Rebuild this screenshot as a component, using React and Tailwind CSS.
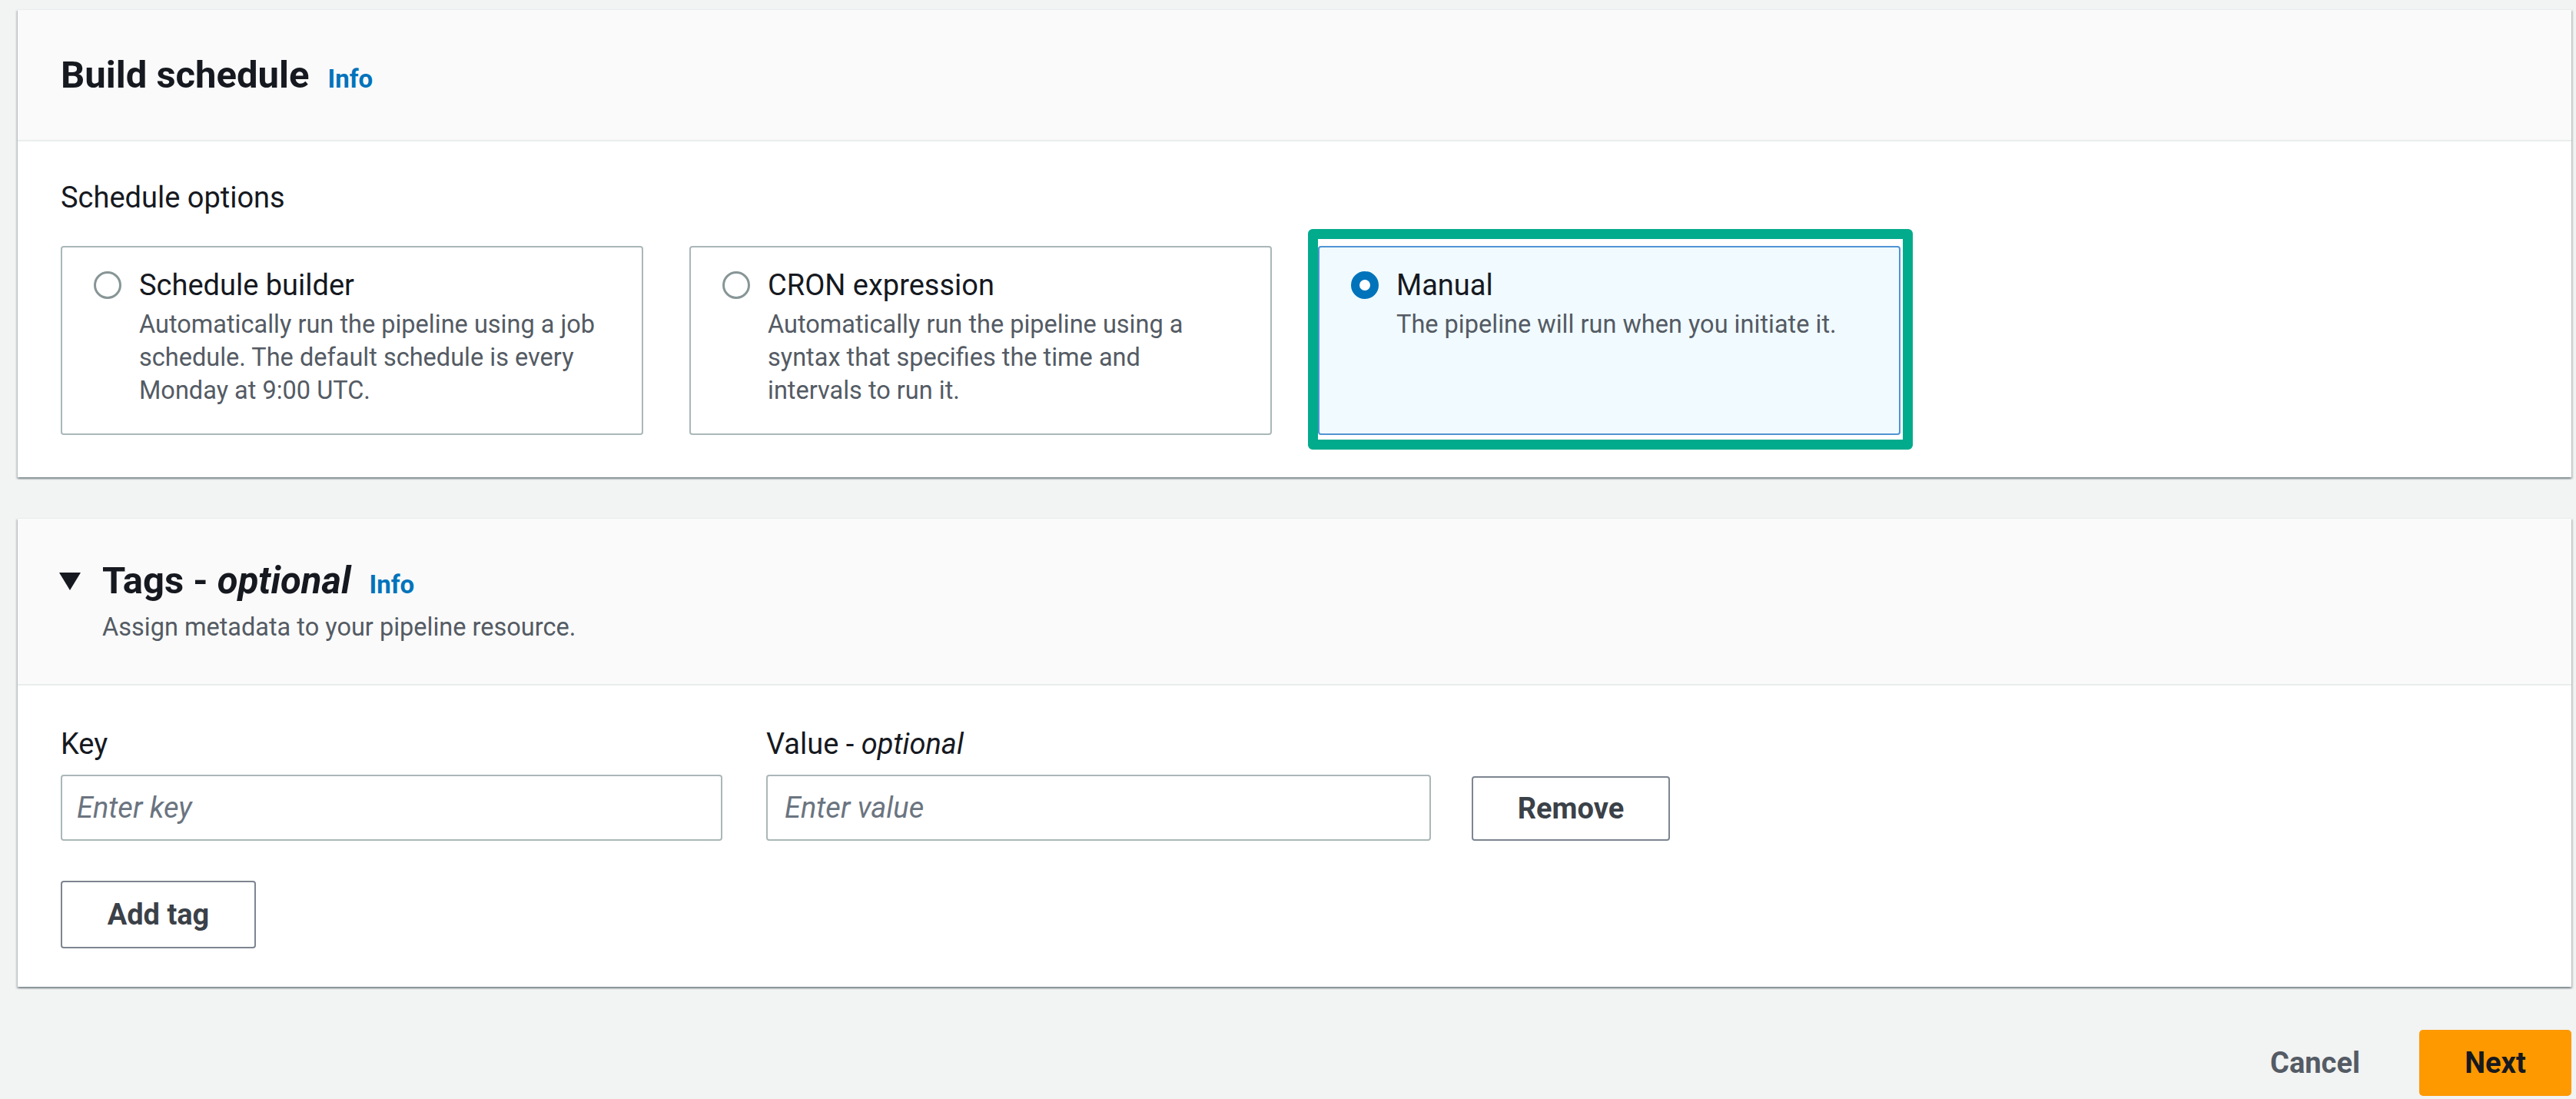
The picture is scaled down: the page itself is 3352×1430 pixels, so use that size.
const cardShadow =
  'shadow-[0_2px_2px_0_rgba(0,28,36,0.3),2px_2px_2px_0_rgba(0,28,36,0.15),-2px_2px_2px_0_rgba(0,28,36,0.15)]'

const options = [
  {
    title: 'Schedule builder',
    lines: [
      'Automatically run the pipeline using a job',
      'schedule. The default schedule is every',
      'Monday at 9:00 UTC.',
    ],
  },
  {
    title: 'CRON expression',
    lines: [
      'Automatically run the pipeline using a',
      'syntax that specifies the time and',
      'intervals to run it.',
    ],
  },
  {
    title: 'Manual',
    lines: ['The pipeline will run when you initiate it.'],
    selected: true,
  },
]

const Radio = ({ checked }) =>
  checked ? (
    <span className="mt-[9px] h-[36px] w-[36px] shrink-0 rounded-full border-[11px] border-[#0073bb] bg-white" />
  ) : (
    <span className="mt-[9px] h-[36px] w-[36px] shrink-0 rounded-full border-[3px] border-[#879596] bg-white" />
  )

const Tile = ({ option }) => (
  <div className="relative w-[758px] shrink-0">
    <div
      className={`flex h-[246px] gap-[23px] rounded-[4px] border-2 pl-[41px] pr-[30px] pt-[22px] ${
        option.selected ? 'border-[#4f94d4] bg-[#f1faff]' : 'border-[#aab7b8] bg-white'
      }`}
    >
      <Radio checked={option.selected} />
      <div>
        <div className="text-[38px] leading-[54px] text-[#16191f]">{option.title}</div>
        <p className="mt-[3px] text-[32.5px] leading-[43px] text-[#545b64]">
          {option.lines.map((l, i) => (
            <span key={i} className="block">
              {l}
            </span>
          ))}
        </p>
      </div>
    </div>
    {/* highlight annotation around the chosen option */}
    {option.selected && (
      <div className="pointer-events-none absolute -bottom-[19px] -left-[13px] -right-[16px] -top-[22px] rounded-[6px] border-[13px] border-[#03ab8d]" />
    )}
  </div>
)

const Info = () => (
  <a className="ml-[24px] cursor-pointer text-[33px] font-bold text-[#0073bb]">Info</a>
)

const Button = ({ children, className = '' }) => (
  <button
    className={`rounded-[4px] border-2 border-[#7d8590] bg-white text-[38px] font-bold text-[#3b4148] ${className}`}
  >
    {children}
  </button>
)

export default function App() {
  return (
    <div className="min-h-screen bg-[#f2f3f3] pb-[5px] pl-[23px] pr-[6px] pt-[12px] font-['Roboto',sans-serif]">
      {/* Build schedule */}
      <section className={`border-t border-[#eaeded] bg-white ${cardShadow}`}>
        <div className="flex h-[171px] items-center border-b-2 border-[#eaeded] bg-[#fafafa] px-[56px]">
          <div className="flex items-baseline">
            <h2 className="text-[49px] font-bold leading-[60px] text-[#16191f]">Build schedule</h2>
            <Info />
          </div>
        </div>
        <div className="pb-[55px] pl-[56px] pt-[46px]">
          <div className="text-[38px] leading-[54px] text-[#16191f]">Schedule options</div>
          <div className="mt-[36px] flex gap-[60px]">
            {options.map((o) => (
              <Tile key={o.title} option={o} />
            ))}
          </div>
        </div>
      </section>

      {/* Tags */}
      <section className={`mt-[53px] border-t border-[#eaeded] bg-white ${cardShadow}`}>
        <div className="border-b-2 border-[#eaeded] bg-[#fafafa] pb-[52px] pl-[54px] pt-[51px]">
          <div className="flex items-center">
            <svg width="28" height="24" viewBox="0 0 28 24" className="shrink-0">
              <polygon points="0,1 28,1 14,24" fill="#16191f" />
            </svg>
            <div className="ml-[28px] flex items-baseline">
              <h2 className="text-[49px] font-bold leading-[60px] text-[#16191f]">
                Tags - <i>optional</i>
              </h2>
              <Info />
            </div>
          </div>
          <p className="ml-[56px] mt-[9px] text-[32.5px] leading-[43px] text-[#545b64]">
            Assign metadata to your pipeline resource.
          </p>
        </div>
        <div className="pb-[50px] pl-[56px] pt-[49px]">
          <div className="flex items-end">
            <label className="flex w-[861px] flex-col">
              <span className="text-[38px] leading-[54px] text-[#16191f]">Key</span>
              <input
                placeholder="Enter key"
                className="mt-[13px] h-[86px] rounded-[4px] border-2 border-[#aab7b8] bg-white pl-[19px] text-[38px] text-[#16191f] outline-none placeholder:italic placeholder:text-[#6b7480]"
              />
            </label>
            <label className="ml-[57px] flex w-[865px] flex-col">
              <span className="text-[38px] leading-[54px] text-[#16191f]">
                Value - <i>optional</i>
              </span>
              <input
                placeholder="Enter value"
                className="mt-[13px] h-[86px] rounded-[4px] border-2 border-[#aab7b8] bg-white pl-[22px] text-[38px] text-[#16191f] outline-none placeholder:italic placeholder:text-[#6b7480]"
              />
            </label>
            <Button className="ml-[53px] h-[84px] w-[258px]">Remove</Button>
          </div>
          <Button className="mt-[52px] h-[88px] w-[254px]">Add tag</Button>
        </div>
      </section>

      {/* Footer actions */}
      <div className="mt-[56px] flex items-center justify-end">
        <button className="mr-[77px] text-[38px] font-bold text-[#545b64]">Cancel</button>
        <button className="h-[86px] w-[198px] rounded-[5px] bg-[#ff9900] text-[38px] font-bold text-[#16191f]">
          Next
        </button>
      </div>
    </div>
  )
}
